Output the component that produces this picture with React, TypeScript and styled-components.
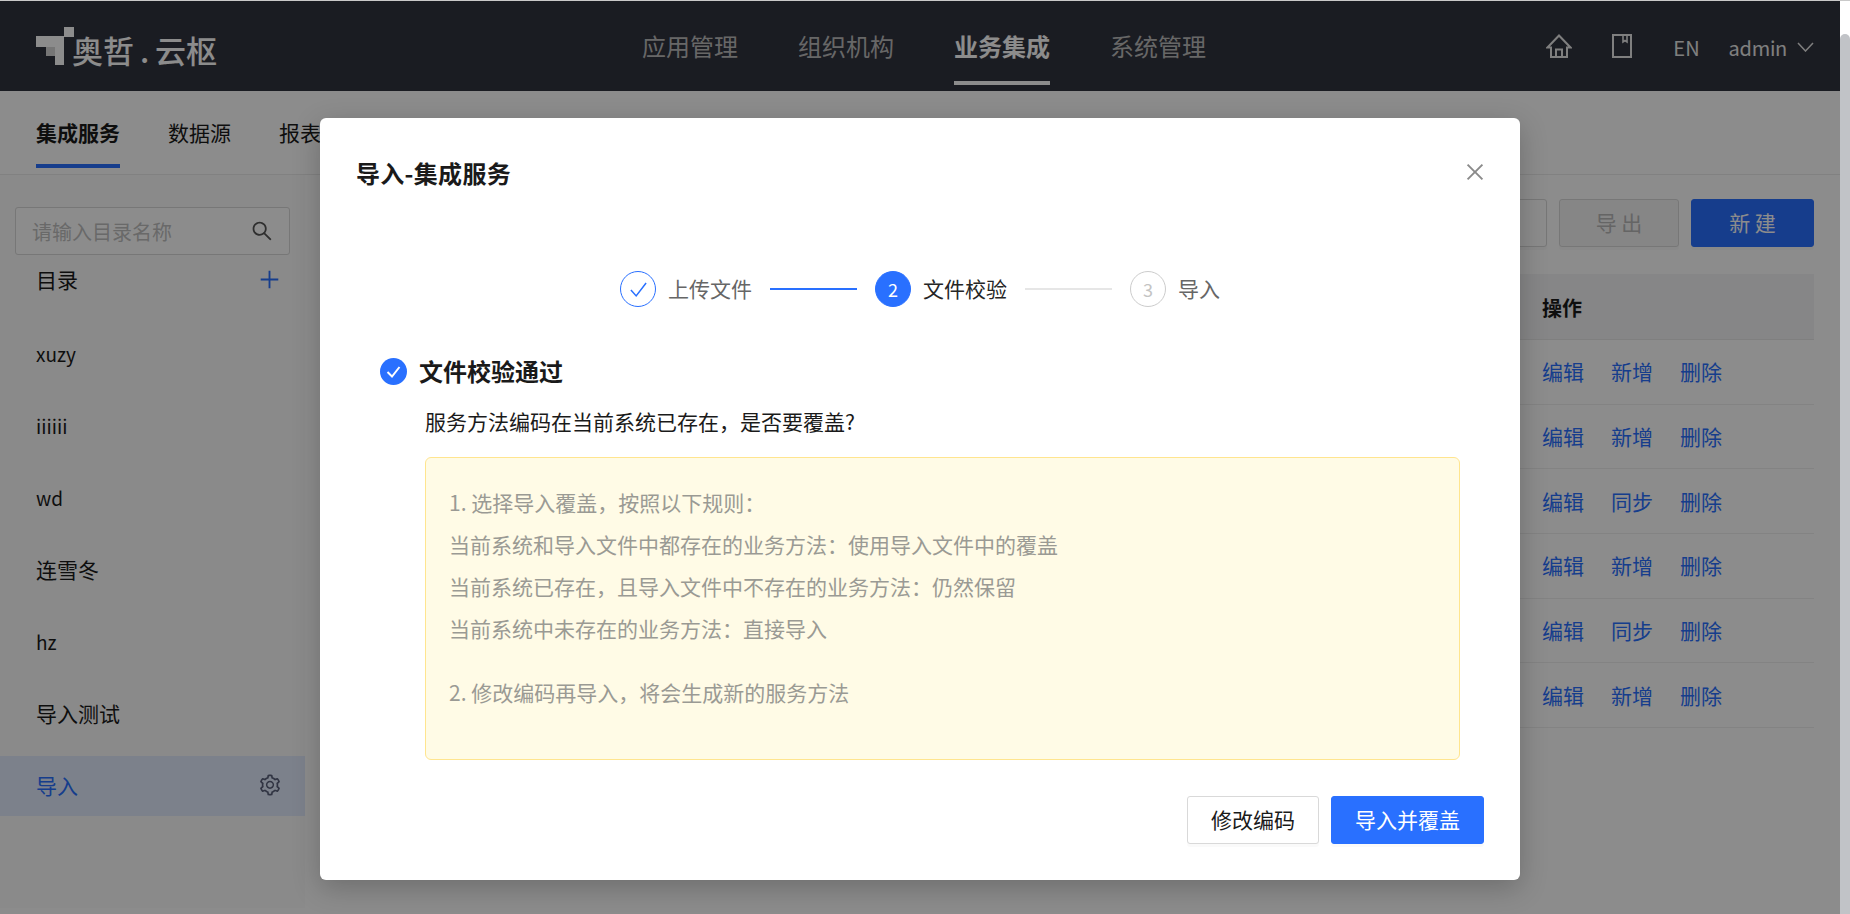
import React from "react";
import styled, { createGlobalStyle } from "styled-components";
import {
  AiOutlineClose,
  AiOutlinePlus,
  AiOutlineSearch,
  AiOutlineSetting,
} from "react-icons/ai";

const PRIMARY = "#2970ff";

const GlobalStyle = createGlobalStyle`
  html, body, #root {
    margin: 0;
    padding: 0;
    height: 100%;
  }
  body {
    overflow: hidden;
    background: #fff;
    font-family: "Noto Sans CJK SC", "Noto Sans", sans-serif;
    font-size: 21px;
    color: #1a1a1a;
  }
  * {
    box-sizing: border-box;
  }
`;

const Root = styled.div`
  width: 1850px;
  height: 914px;
  display: flex;
  flex-direction: column;
  overflow: hidden;
`;

const ChromeLine = styled.div`
  height: 1px;
  flex: none;
  background: #c9c9c9;
`;

const Body = styled.div`
  flex: 1;
  display: flex;
  min-height: 0;
`;

const Page = styled.div`
  position: relative;
  flex: 1;
  display: flex;
  flex-direction: column;
  background: #fff;
  min-width: 0;
`;

const ScrollTrack = styled.div`
  width: 10px;
  flex: none;
  padding-top: 33px;
  background: #fff;
`;

const ScrollThumb = styled.div`
  height: 100%;
  background: #c1c3c7;
  border-radius: 5px 5px 0 0;
`;

/* header */
const Header = styled.header`
  height: 90px;
  flex: none;
  display: grid;
  grid-template-columns: 606px 1fr auto;
  align-items: start;
  padding: 0 26px 0 36px;
  background: #31333e;
  color: #fff;
`;

const Logo = styled.div`
  display: flex;
  align-items: flex-start;
  padding-top: 26px;
`;

const LogoText = styled.span`
  margin: 2px 0 0 -2px;
  font-size: 31px;
  line-height: 42px;
  font-weight: 500;
  white-space: nowrap;
`;

const LogoDot = styled.span`
  display: inline-block;
  width: 21px;
  text-align: center;
`;

const TopNav = styled.nav`
  display: flex;
  gap: 60px;
`;

const TopNavItem = styled.div<{ $active?: boolean }>`
  height: 84px;
  padding-top: 8px;
  display: flex;
  align-items: center;
  font-size: 24px;
  font-weight: ${(p) => (p.$active ? 700 : 400)};
  color: ${(p) => (p.$active ? "#fff" : "#bcbcbc")};
  border-bottom: 4px solid ${(p) => (p.$active ? "#fff" : "transparent")};
`;

const HeaderRight = styled.div`
  height: 90px;
  padding-top: 2px;
  display: flex;
  align-items: center;
  color: #e8e8e8;
  font-size: 20px;
`;

const HomeSvg = styled.svg`
  width: 26px;
  height: 24px;
  margin: -2px 40px 0 0;
`;

const BookSvg = styled.svg`
  width: 20px;
  height: 24px;
  margin: -2px 41px 0 0;
`;

const Lang = styled.span`
  margin-right: 29px;
`;

const User = styled.span`
  display: flex;
  align-items: center;
  gap: 10px;
  letter-spacing: -0.3px;
`;

const ChevronSvg = styled.svg`
  width: 17px;
  height: 10px;
`;

/* sub nav */
const SubNav = styled.div`
  height: 84px;
  flex: none;
  display: flex;
  gap: 48px;
  padding-left: 36px;
  border-bottom: 1px solid #ebebeb;
`;

const SubTab = styled.div<{ $active?: boolean }>`
  height: 77px;
  padding-top: 9px;
  display: flex;
  align-items: center;
  font-weight: ${(p) => (p.$active ? 700 : 400)};
  border-bottom: 4px solid ${(p) => (p.$active ? PRIMARY : "transparent")};
`;

/* content */
const Content = styled.div`
  flex: 1;
  display: flex;
  min-height: 0;
`;

const Sidebar = styled.aside`
  width: 305px;
  height: 733px;
  flex: none;
  padding-top: 32px;
  background: #fbfbfb;
`;

const SearchBox = styled.div`
  width: 275px;
  height: 48px;
  margin-left: 15px;
  padding: 0 15px 0 16px;
  display: flex;
  align-items: center;
  justify-content: space-between;
  border: 1px solid #d9d9d9;
  border-radius: 3px;
  background: #fff;
  font-size: 20px;
  color: #bfbfbf;
`;

const SearchIcon = styled(AiOutlineSearch)`
  font-size: 24px;
  color: #555;
`;

const TreeHead = styled.div`
  height: 50px;
  margin-bottom: 19px;
  padding: 0 23px 2px 36px;
  display: flex;
  align-items: center;
  justify-content: space-between;
`;

const PlusIcon = styled(AiOutlinePlus)`
  font-size: 25px;
  color: ${PRIMARY};
`;

const TreeItem = styled.div<{ $active?: boolean; $latin?: boolean }>`
  height: 60px;
  margin-bottom: 12px;
  padding: 0 23px 2px 36px;
  display: flex;
  align-items: center;
  justify-content: space-between;
  font-size: ${(p) => (p.$latin ? 19 : 21)}px;
  color: ${(p) => (p.$active ? PRIMARY : "#1a1a1a")};
  background: ${(p) => (p.$active ? "#e2ebfd" : "transparent")};
`;

const GearIcon = styled(AiOutlineSetting)`
  font-size: 24px;
  color: #59607a;
`;

const Main = styled.main`
  flex: 1;
  padding: 24px 26px 0 24px;
  min-width: 0;
`;

const Toolbar = styled.div`
  display: flex;
  justify-content: flex-end;
  gap: 12px;
`;

const Button = styled.div<{ $variant?: "primary" | "disabled" | "default"; $width: number }>`
  width: ${(p) => p.$width}px;
  height: 48px;
  padding-bottom: 2px;
  display: flex;
  align-items: center;
  justify-content: center;
  border-radius: 3px;
  font-size: 21px;
  border: 1px solid
    ${(p) => (p.$variant === "primary" ? PRIMARY : "#d9d9d9")};
  background: ${(p) =>
    p.$variant === "primary"
      ? PRIMARY
      : p.$variant === "disabled"
      ? "#f5f5f5"
      : "#fff"};
  color: ${(p) =>
    p.$variant === "primary"
      ? "#fff"
      : p.$variant === "disabled"
      ? "#b8b8b8"
      : "#1a1a1a"};
  box-shadow: 0 3px 0 rgba(0, 0, 0, 0.02);
`;

const Table = styled.div`
  margin-top: 27px;
`;

const TableHead = styled.div`
  height: 66px;
  display: flex;
  align-items: center;
  justify-content: flex-end;
  padding-top: 1px;
  background: #f4f4f6;
  border-bottom: 1px solid #e8e8e8;
`;

const ActionHead = styled.div`
  width: 272px;
  font-weight: 700;
  font-size: 20px;
`;

const TableRow = styled.div`
  height: 64.67px;
  padding-bottom: 1px;
  display: flex;
  align-items: center;
  justify-content: flex-end;
  border-bottom: 1px solid #eeeeee;
`;

const Actions = styled.div`
  width: 272px;
  display: flex;
  gap: 27px;
`;

const LinkText = styled.span`
  color: ${PRIMARY};
`;

/* modal */
const Mask = styled.div`
  position: absolute;
  inset: 0;
  display: flex;
  justify-content: center;
  padding-top: 117px;
  background: rgba(0, 0, 0, 0.45);
`;

const Modal = styled.div`
  width: 1200px;
  height: 762px;
  display: flex;
  flex-direction: column;
  padding-top: 39px;
  background: #fff;
  border-radius: 6px;
  box-shadow: 0 8px 28px rgba(0, 0, 0, 0.22);
`;

const ModalHead = styled.div`
  display: flex;
  align-items: center;
  justify-content: space-between;
  padding: 0 33px 0 36px;
`;

const ModalTitle = styled.div`
  font-size: 24px;
  line-height: 32px;
  font-weight: 700;
  letter-spacing: 0.3px;
`;

const CloseIcon = styled(AiOutlineClose)`
  font-size: 24px;
  margin-top: -3px;
  color: #8a8a8a;
`;

const Steps = styled.div`
  margin-top: 82px;
  display: flex;
  align-items: center;
  justify-content: center;
`;

const StepCircle = styled.div<{ $state: "done" | "current" | "wait" }>`
  width: 36px;
  height: 36px;
  flex: none;
  display: flex;
  align-items: center;
  justify-content: center;
  border-radius: 50%;
  font-size: 18px;
  border: 1px solid ${(p) => (p.$state === "wait" ? "#cccccc" : PRIMARY)};
  background: ${(p) => (p.$state === "current" ? PRIMARY : "#fff")};
  color: ${(p) =>
    p.$state === "current" ? "#fff" : p.$state === "wait" ? "#c4c4c4" : PRIMARY};
`;

const StepLabel = styled.span<{ $current?: boolean }>`
  margin: -2px 0 0 12px;
  color: ${(p) => (p.$current ? "#262626" : "#666")};
`;

const StepLine = styled.div<{ $done?: boolean }>`
  width: 87px;
  height: 2px;
  margin: 0 18px;
  background: ${(p) => (p.$done ? PRIMARY : "#e6e6e6")};
`;

const ResultRow = styled.div`
  margin-top: 48px;
  padding-left: 60px;
  display: flex;
  align-items: center;
  gap: 12px;
  font-size: 24px;
  line-height: 32px;
  font-weight: 700;
`;

const Question = styled.div`
  margin: 19px 0 0 105px;
  font-size: 21px;
  line-height: 30px;
`;

const RuleBox = styled.div`
  width: 1035px;
  height: 303px;
  margin: 21px 0 0 105px;
  padding: 23px 23px 0;
  background: #fffbe6;
  border: 1px solid #ffe58f;
  border-radius: 6px;
  color: #9a9a94;
  font-size: 21px;
  line-height: 42px;
`;

const RuleGap = styled.div`
  height: 22px;
`;

const ModalFoot = styled.div`
  margin-top: 36px;
  padding-right: 36px;
  display: flex;
  justify-content: flex-end;
  gap: 12px;
`;

const HomeIcon = () => (
  <HomeSvg viewBox="0 0 26 24" fill="none" stroke="currentColor" strokeWidth="2">
    <path d="M13 1.5 24.5 13.5H21V23H5V13.5H1.5Z" />
    <path d="M10 23V15.5H16V23" />
  </HomeSvg>
);

const BookIcon = () => (
  <BookSvg viewBox="0 0 20 24" fill="none" stroke="currentColor" strokeWidth="2">
    <rect x="1" y="1" width="18" height="22" />
    <path d="M11 1V8L13 6.5 15 8V1" strokeWidth="1.6" />
  </BookSvg>
);

const ChevronIcon = () => (
  <ChevronSvg viewBox="0 0 17 10" fill="none" stroke="currentColor" strokeWidth="1.5">
    <path d="M1 1 8.5 9 16 1" />
  </ChevronSvg>
);

const LogoMark = () => (
  <svg width="38" height="38" viewBox="0 0 38 38">
    <rect x="28" y="0" width="10" height="10" fill="#fff" />
    <path d="M0 9H28V38H19V29H10V20H0Z" fill="#fff" />
    <path d="M10 20H19V29H10Z" fill="#d8d8d8" />
  </svg>
);

const CheckDone = () => (
  <svg width="21" height="21" viewBox="0 0 18 18" fill="none" stroke="currentColor" strokeWidth="1.3">
    <path d="M2.5 9.5 7 14.5 15.5 3.5" />
  </svg>
);

const ResultIcon = () => (
  <svg width="27" height="27" viewBox="0 0 27 27">
    <circle cx="13.5" cy="13.5" r="13.5" fill={PRIMARY} />
    <path d="M7.5 14 12 18.5 19.5 9" fill="none" stroke="#fff" strokeWidth="2" />
  </svg>
);

const treeItems = ["xuzy", "iiiiii", "wd", "连雪冬", "hz", "导入测试"];
const tableRows = ["新增", "新增", "同步", "新增", "同步", "新增"];

export default function App() {
  return (
    <Root>
      <GlobalStyle />
      <ChromeLine />
      <Body>
        <Page>
          <Header>
            <Logo>
              <LogoMark />
              <LogoText>
                奥哲<LogoDot>.</LogoDot>云枢
              </LogoText>
            </Logo>
            <TopNav>
              <TopNavItem>应用管理</TopNavItem>
              <TopNavItem>组织机构</TopNavItem>
              <TopNavItem $active>业务集成</TopNavItem>
              <TopNavItem>系统管理</TopNavItem>
            </TopNav>
            <HeaderRight>
              <HomeIcon />
              <BookIcon />
              <Lang>EN</Lang>
              <User>
                admin
                <ChevronIcon />
              </User>
            </HeaderRight>
          </Header>

          <SubNav>
            <SubTab $active>集成服务</SubTab>
            <SubTab>数据源</SubTab>
            <SubTab>报表</SubTab>
          </SubNav>

          <Content>
            <Sidebar>
              <SearchBox>
                请输入目录名称
                <SearchIcon />
              </SearchBox>
              <TreeHead>
                目录
                <PlusIcon />
              </TreeHead>
              {treeItems.map((name) => (
                <TreeItem key={name} $latin={/^[a-z]+$/.test(name)}>
                  {name}
                </TreeItem>
              ))}
              <TreeItem $active>
                导入
                <GearIcon />
              </TreeItem>
            </Sidebar>
            <Main>
              <Toolbar>
                <Button $width={120}>导 入</Button>
                <Button $width={120} $variant="disabled">
                  导 出
                </Button>
                <Button $width={123} $variant="primary">
                  新 建
                </Button>
              </Toolbar>
              <Table>
                <TableHead>
                  <ActionHead>操作</ActionHead>
                </TableHead>
                {tableRows.map((action, i) => (
                  <TableRow key={i}>
                    <Actions>
                      <LinkText>编辑</LinkText>
                      <LinkText>{action}</LinkText>
                      <LinkText>删除</LinkText>
                    </Actions>
                  </TableRow>
                ))}
              </Table>
            </Main>
          </Content>

          <Mask>
            <Modal>
              <ModalHead>
                <ModalTitle>导入-集成服务</ModalTitle>
                <CloseIcon />
              </ModalHead>

              <Steps>
                <StepCircle $state="done">
                  <CheckDone />
                </StepCircle>
                <StepLabel>上传文件</StepLabel>
                <StepLine $done />
                <StepCircle $state="current">2</StepCircle>
                <StepLabel $current>文件校验</StepLabel>
                <StepLine />
                <StepCircle $state="wait">3</StepCircle>
                <StepLabel>导入</StepLabel>
              </Steps>

              <ResultRow>
                <ResultIcon />
                文件校验通过
              </ResultRow>
              <Question>服务方法编码在当前系统已存在，是否要覆盖?</Question>

              <RuleBox>
                <div>1. 选择导入覆盖，按照以下规则：</div>
                <div>当前系统和导入文件中都存在的业务方法：使用导入文件中的覆盖</div>
                <div>当前系统已存在，且导入文件中不存在的业务方法：仍然保留</div>
                <div>当前系统中未存在的业务方法：直接导入</div>
                <RuleGap />
                <div>2. 修改编码再导入，将会生成新的服务方法</div>
              </RuleBox>

              <ModalFoot>
                <Button $width={132}>修改编码</Button>
                <Button $width={153} $variant="primary">
                  导入并覆盖
                </Button>
              </ModalFoot>
            </Modal>
          </Mask>
        </Page>
        <ScrollTrack>
          <ScrollThumb />
        </ScrollTrack>
      </Body>
    </Root>
  );
}
